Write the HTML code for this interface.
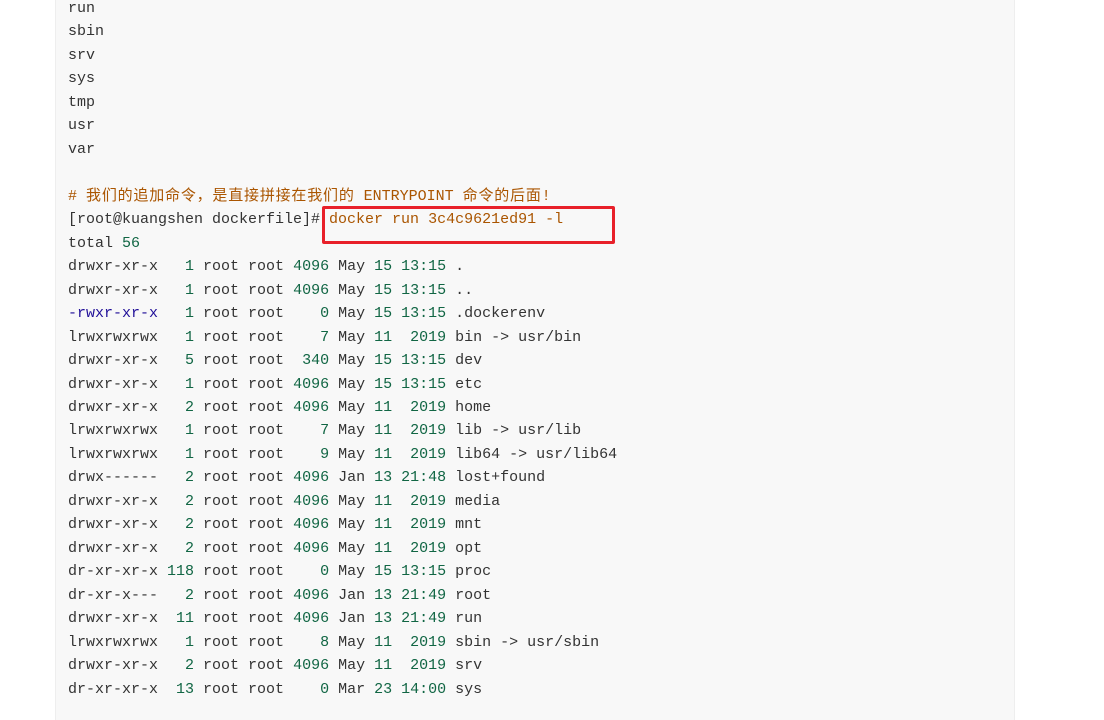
<!DOCTYPE html>
<html><head><meta charset="utf-8"><style>
html,body{margin:0;padding:0;width:1104px;height:706px;overflow:hidden;background:#fff}
.blk{position:absolute;left:55px;top:-20px;width:958px;height:740px;background:#f8f8f8;border-left:1px solid #eee;border-right:1px solid #eee}
pre{position:absolute;left:68px;top:-3px;margin:0;font-family:"Liberation Mono","Noto Sans CJK SC",monospace;font-size:15px;line-height:23.47px;color:#333}
.n{color:#116644}.c{color:#aa5500}.b{color:#221199}.k{letter-spacing:0.8px}
.box{position:absolute;left:322px;top:206px;width:287px;height:32px;border:3px solid #e8202a;border-radius:2px}
</style></head><body>
<div class="blk"></div>
<pre>run
sbin
srv
sys
tmp
usr
var

<span class="c"># <span class="k">我们的追加命令，是直接拼接在我们的</span> ENTRYPOINT <span class="k">命令的后面!</span></span>
[root@kuangshen dockerfile]# <span class="c">docker run 3c4c9621ed91 -l</span>
total <span class="n">56</span>
drwxr-xr-x   <span class="n">1</span> root root <span class="n">4096</span> May <span class="n">15 13:15</span> .
drwxr-xr-x   <span class="n">1</span> root root <span class="n">4096</span> May <span class="n">15 13:15</span> ..
<span class="b">-rwxr-xr-x</span>   <span class="n">1</span> root root    <span class="n">0</span> May <span class="n">15 13:15</span> .dockerenv
lrwxrwxrwx   <span class="n">1</span> root root    <span class="n">7</span> May <span class="n">11  2019</span> bin -&gt; usr/bin
drwxr-xr-x   <span class="n">5</span> root root  <span class="n">340</span> May <span class="n">15 13:15</span> dev
drwxr-xr-x   <span class="n">1</span> root root <span class="n">4096</span> May <span class="n">15 13:15</span> etc
drwxr-xr-x   <span class="n">2</span> root root <span class="n">4096</span> May <span class="n">11  2019</span> home
lrwxrwxrwx   <span class="n">1</span> root root    <span class="n">7</span> May <span class="n">11  2019</span> lib -&gt; usr/lib
lrwxrwxrwx   <span class="n">1</span> root root    <span class="n">9</span> May <span class="n">11  2019</span> lib64 -&gt; usr/lib64
drwx------   <span class="n">2</span> root root <span class="n">4096</span> Jan <span class="n">13 21:48</span> lost+found
drwxr-xr-x   <span class="n">2</span> root root <span class="n">4096</span> May <span class="n">11  2019</span> media
drwxr-xr-x   <span class="n">2</span> root root <span class="n">4096</span> May <span class="n">11  2019</span> mnt
drwxr-xr-x   <span class="n">2</span> root root <span class="n">4096</span> May <span class="n">11  2019</span> opt
dr-xr-xr-x <span class="n">118</span> root root    <span class="n">0</span> May <span class="n">15 13:15</span> proc
dr-xr-x---   <span class="n">2</span> root root <span class="n">4096</span> Jan <span class="n">13 21:49</span> root
drwxr-xr-x  <span class="n">11</span> root root <span class="n">4096</span> Jan <span class="n">13 21:49</span> run
lrwxrwxrwx   <span class="n">1</span> root root    <span class="n">8</span> May <span class="n">11  2019</span> sbin -&gt; usr/sbin
drwxr-xr-x   <span class="n">2</span> root root <span class="n">4096</span> May <span class="n">11  2019</span> srv
dr-xr-xr-x  <span class="n">13</span> root root    <span class="n">0</span> Mar <span class="n">23 14:00</span> sys</pre>
<div class="box"></div>
</body></html>
